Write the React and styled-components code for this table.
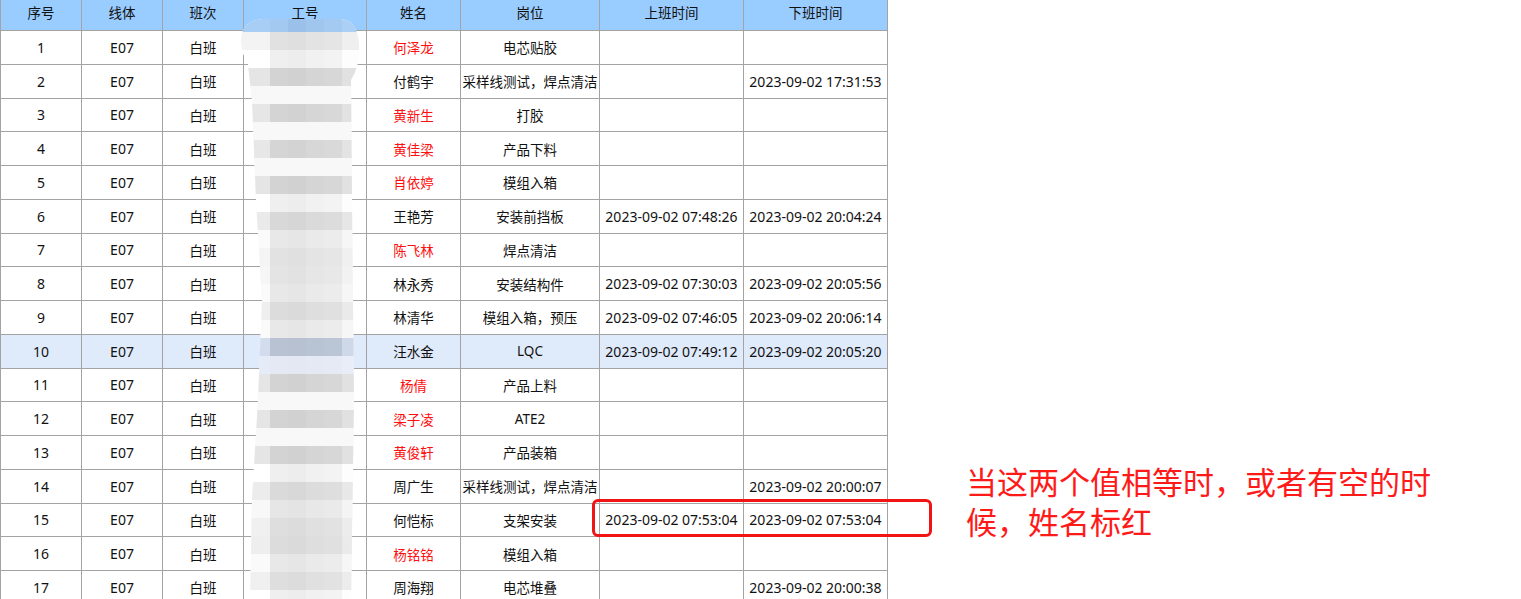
import React from 'react';
import styled, { createGlobalStyle } from 'styled-components';

const GlobalStyle = createGlobalStyle`
  html, body {
    margin: 0;
    padding: 0;
    background: #ffffff;
    overflow: hidden;
  }
  body {
    font-family: "Noto Sans", "Noto Sans CJK SC", sans-serif;
  }
`;

const Page = styled.div`
  display: flex;
  align-items: flex-start;
`;

const TableWrap = styled.div`
  position: relative;
  width: 888px;
  flex: none;
`;

const Grid = styled.table`
  border-collapse: collapse;
  table-layout: fixed;
  width: 888px;
  font-size: 14px;
  color: #111;
`;

const HeadCell = styled.th`
  height: 30px;
  padding: 0;
  background: #99ccff;
  font-weight: normal;
  font-size: 13.5px;
  border: 1px solid #a3a3a3;
  border-top: 0;
  text-align: center;
  vertical-align: top;
  line-height: 26px;
`;

const Row = styled.tr`
  height: 33.75px;
  background: ${p => (p.$active ? '#dfeafb' : '#ffffff')};
`;

const Cell = styled.td`
  padding: 0 1px;
  border: 1px solid #a3a3a3;
  text-align: center;
  white-space: nowrap;
  overflow: hidden;
  font-size: ${p => (p.$cjk ? '13.5px' : '14px')};
  color: ${p => (p.$red ? '#ff1010' : '#111')};
`;

const Redact = styled.svg`
  position: absolute;
  left: 0;
  top: 0;
  pointer-events: none;
`;

const Marker = styled.div`
  position: absolute;
  left: 592px;
  top: 499px;
  width: 334px;
  height: 32px;
  border: 3.5px solid #f01414;
  border-radius: 6px;
`;

const Note = styled.div`
  margin-left: 78px;
  padding-top: 461px;
  width: 480px;
  font-family: "Noto Sans CJK SC", sans-serif;
  font-size: 31px;
  line-height: 40px;
  color: #ff1a1a;
`;

const cols = [81, 81, 81, 123, 94, 139, 144, 144];
const heads = ['序号', '线体', '班次', '工号', '姓名', '岗位', '上班时间', '下班时间'];

const rows = [
  ['何泽龙', true, '电芯贴胶', '', ''],
  ['付鹤宇', false, '采样线测试，焊点清洁', '', '2023-09-02 17:31:53'],
  ['黄新生', true, '打胶', '', ''],
  ['黄佳梁', true, '产品下料', '', ''],
  ['肖依婷', true, '模组入箱', '', ''],
  ['王艳芳', false, '安装前挡板', '2023-09-02 07:48:26', '2023-09-02 20:04:24'],
  ['陈飞林', true, '焊点清洁', '', ''],
  ['林永秀', false, '安装结构件', '2023-09-02 07:30:03', '2023-09-02 20:05:56'],
  ['林清华', false, '模组入箱，预压', '2023-09-02 07:46:05', '2023-09-02 20:06:14'],
  ['汪水金', false, 'LQC', '2023-09-02 07:49:12', '2023-09-02 20:05:20'],
  ['杨倩', true, '产品上料', '', ''],
  ['梁子凌', true, 'ATE2', '', ''],
  ['黄俊轩', true, '产品装箱', '', ''],
  ['周广生', false, '采样线测试，焊点清洁', '', '2023-09-02 20:00:07'],
  ['何恺标', false, '支架安装', '2023-09-02 07:53:04', '2023-09-02 07:53:04'],
  ['杨铭铭', true, '模组入箱', '', ''],
  ['周海翔', false, '电芯堆叠', '', '2023-09-02 20:00:38'],
];

// mosaic tones of the blurred 工号 column, one per 18px band from y=14
const bands = [
  'blue', 0xe1, 0xef, 0xd3, 0xf8, 0xd4, 0xf8, 0xd5, 0xf8, 0xd3, 0xef,
  0xd8, 0xe8, 0xe2, 0xe4, 0xe8, 0xdc, 0xe8, 'navy', 'pale', 0xd3, 0xf8,
  0xd3, 0xf8, 0xd3, 0xef, 0xda, 0xe6, 0xde, 0xdc, 0xe8, 0xde, 0xef,
];
const tileX = [252, 270, 288, 306, 324, 342];
const tileW = [18, 18, 18, 18, 18, 12];
const shift = [18, 0, -2, 2, 4, 14];

const grey = (v, d) => {
  const n = Math.max(0, Math.min(255, v + d));
  const h = n.toString(16).padStart(2, '0');
  return `#${h}${h}${h}`;
};

const tone = (b, i) => {
  if (b === 'blue') return ['#a9cef5', '#a4c9f1', '#9bc1ea', '#a0c6ee', '#a5caf1', '#acd0f5'][i];
  if (b === 'navy') return ['#d2dcec', '#b9c2d2', '#b7c1d1', '#b8c3d4', '#bac5d6', '#cfd8e9'][i];
  if (b === 'pale') return ['#e6ecf7', '#e4e9f4', '#e3e8f3', '#e4e9f4', '#e5eaf5', '#e8edf8'][i];
  return grey(b, b > 0xf0 ? 0 : shift[i]);
};

const blob =
  'M262 19 Q241 21 241 42 Q242 54 248 64 L252 100 L256 200 L262 300 L258 400 L252 500 L250 604 ' +
  'L351 604 L354 400 L352 200 L351 80 Q360 66 359 44 Q357 19 340 19 Z';

const Redaction = () => (
  <Redact width="888" height="604" viewBox="0 0 888 604">
    <defs>
      <clipPath id="smear">
        <path d={blob} />
      </clipPath>
    </defs>
    <path d={blob} fill="#f6f6f6" />
    <g clipPath="url(#smear)">
      {bands.map((b, r) =>
        tileX.map((x, i) => (
          <rect key={`${r}-${i}`} x={x - (i === 0 ? 12 : 0)} y={14 + r * 18}
            width={tileW[i] + (i === 0 ? 12 : 0) + (i === 5 ? 10 : 0)} height="18" fill={tone(b, i)} />
        ))
      )}
    </g>
  </Redact>
);

const App = () => (
  <Page>
    <GlobalStyle />
    <TableWrap>
      <Grid>
        <colgroup>
          {cols.map((w, i) => <col key={i} style={{ width: w }} />)}
        </colgroup>
        <thead>
          <tr>
            {heads.map(h => <HeadCell key={h}>{h}</HeadCell>)}
          </tr>
        </thead>
        <tbody>
          {rows.map(([name, red, post, on, off], i) => (
            <Row key={i} $active={i === 9}>
              <Cell>{i + 1}</Cell>
              <Cell>E07</Cell>
              <Cell $cjk>白班</Cell>
              <Cell />
              <Cell $cjk $red={red}>{name}</Cell>
              <Cell $cjk>{post}</Cell>
              <Cell>{on}</Cell>
              <Cell>{off}</Cell>
            </Row>
          ))}
        </tbody>
      </Grid>
      <Redaction />
      <Marker />
    </TableWrap>
    <Note>当这两个值相等时，或者有空的时候，姓名标红</Note>
  </Page>
);

export default App;
